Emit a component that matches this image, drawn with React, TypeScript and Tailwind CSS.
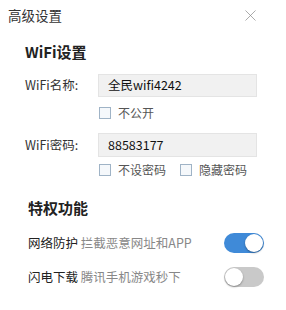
import { X } from 'lucide-react';

function Check({ label }: { label: string }) {
  return (
    <label className="flex items-center gap-[7px]">
      <span className="w-[12px] h-[12px] border border-[#9fb3c6] bg-[#f5f8fb]" />
      <span className="text-[12px] text-[#555]">{label}</span>
    </label>
  );
}

function Toggle({ on }: { on: boolean }) {
  return (
    <div className={`w-[40px] h-[20px] rounded-full flex items-center p-[1px] ${on ? 'bg-[#3f8ad8] justify-end' : 'bg-[#c9c9c9] justify-start'}`}>
      <span className="w-[18px] h-[18px] rounded-full bg-white shadow-[0_1px_2px_rgba(0,0,0,0.35)]" />
    </div>
  );
}

export default function App() {
  return (
    <div className="w-[286px] h-[310px] bg-white overflow-hidden text-[#222]" style={{ fontFamily: '"Microsoft YaHei", "Noto Sans CJK SC", sans-serif' }}>
      <div className="flex items-center justify-between pl-[8px] pr-[26px] pt-[4px] h-[26px]">
        <span className="text-[13.5px] text-[#333]">高级设置</span>
        <X size={19} strokeWidth={0.9} className="text-[#888]" />
      </div>

      <div className="pl-[25px] pr-[28px]">
        <h2 className="text-[15px] font-bold mt-[16px] leading-[20px]">WiFi设置</h2>

        <div className="flex items-center mt-[12px]">
          <span className="w-[73px] text-[12.5px] text-[#333]">WiFi名称:</span>
          <div className="w-[159px] h-[23px] bg-[#f1f1f1] border border-[#e4e4e4] flex items-center px-[9px] text-[12.5px] text-[#111]">全民wifi4242</div>
        </div>
        <div className="pl-[74px] mt-[7px]">
          <Check label="不公开" />
        </div>

        <div className="flex items-center mt-[11px]">
          <span className="w-[73px] text-[12.5px] text-[#333]">WiFi密码:</span>
          <div className="w-[159px] h-[24px] bg-[#f1f1f1] border border-[#e4e4e4] flex items-center px-[9px] text-[12.5px] text-[#111]">88583177</div>
        </div>
        <div className="pl-[74px] mt-[4px] flex gap-[14px]">
          <Check label="不设密码" />
          <Check label="隐藏密码" />
        </div>
      </div>

      <div className="pl-[28px] pr-[22px]">
        <h2 className="text-[15px] font-bold mt-[19px] leading-[20px]">特权功能</h2>
        <div className="flex items-center justify-between mt-[15px]">
          <span className="text-[12.5px]">网络防护 <span className="text-[#888]">拦截恶意网址和APP</span></span>
          <Toggle on />
        </div>
        <div className="flex items-center justify-between mt-[14px]">
          <span className="text-[12.5px]">闪电下载 <span className="text-[#888]">腾讯手机游戏秒下</span></span>
          <Toggle on={false} />
        </div>
      </div>
    </div>
  );
}
